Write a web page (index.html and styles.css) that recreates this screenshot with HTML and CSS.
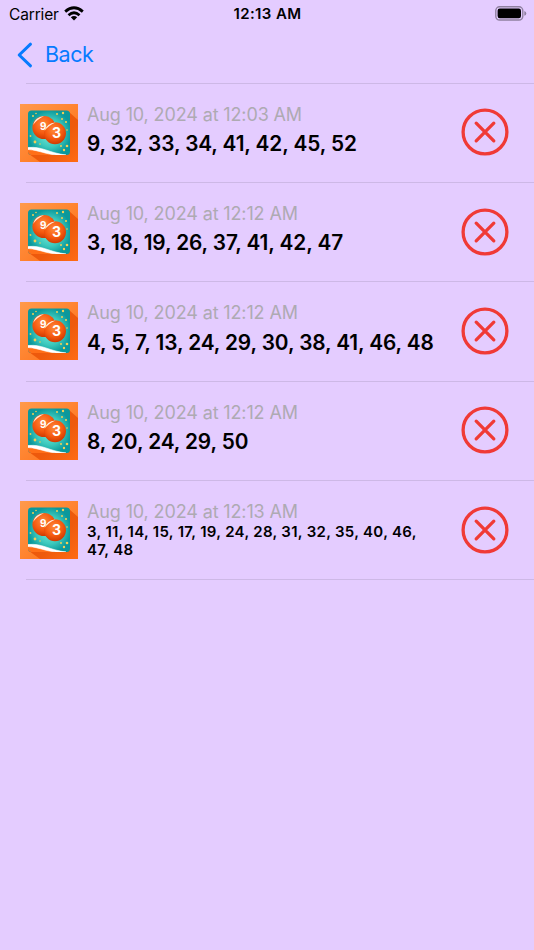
FILE: index.html
```html
<!DOCTYPE html>
<html lang="en">
<head>
    <meta charset="UTF-8">
    <meta name="viewport" content="width=device-width, initial-scale=1.0">
    <title>History</title>
    <link rel="stylesheet" href="styles.css">
</head>
<body>
    <!-- shared icons -->
    <svg class="defs" width="0" height="0">
        <defs>
            <linearGradient id="tile" x1="0" y1="0" x2="1" y2="1">
                <stop offset="0" stop-color="#ff9a4c"/>
                <stop offset="0.5" stop-color="#ff8430"/>
                <stop offset="1" stop-color="#ff6a10"/>
            </linearGradient>
            <linearGradient id="shadow" x1="0" y1="0" x2="1" y2="1">
                <stop offset="0" stop-color="#e9540c"/>
                <stop offset="0.6" stop-color="#ee5a0c"/>
                <stop offset="1" stop-color="#ff6c14"/>
            </linearGradient>
            <radialGradient id="teal">
                <stop offset="0" stop-color="#7deedd"/>
                <stop offset="0.6" stop-color="#3cc9bd"/>
                <stop offset="1" stop-color="#0b989b"/>
            </radialGradient>
            <radialGradient id="ball" cx="0.45" cy="0.35" r="0.65">
                <stop offset="0" stop-color="#ff8a3c"/>
                <stop offset="0.6" stop-color="#f65a10"/>
                <stop offset="1" stop-color="#cf3a02"/>
            </radialGradient>
            <clipPath id="card"><rect x="8" y="6.5" width="42" height="44.5" rx="3.5"/></clipPath>
        </defs>
        <symbol id="lotto" viewBox="0 0 58 58">
            <rect width="58" height="58" fill="url(#tile)"/>
            <path d="M49 8L58 16V58H20L9 50Z" fill="url(#shadow)"/>
            <g clip-path="url(#card)">
                <rect x="8" y="6" width="43" height="46" fill="url(#teal)"/>
                <g fill="#f5cf55">
                    <circle cx="13" cy="12" r="1"/>
                    <circle cx="16" cy="9.5" r="0.8"/>
                    <circle cx="37" cy="10" r="1"/>
                    <circle cx="43" cy="9" r="1.2"/>
                    <circle cx="42" cy="15" r="1"/>
                    <circle cx="46" cy="18" r="1.1"/>
                    <circle cx="47" cy="26" r="0.8"/>
                    <circle cx="10.5" cy="32" r="0.9"/>
                    <circle cx="15" cy="38" r="1.4"/>
                    <circle cx="20" cy="40" r="0.8"/>
                    <circle cx="41" cy="42" r="1"/>
                    <circle cx="47" cy="42" r="1.3"/>
                    <circle cx="44" cy="46" r="1.2"/>
                </g>
                <path d="M8 44.5C20 44 29 51 46 52H8Z" fill="#ff6f18"/>
                <path d="M8 43.5C22 42 29 49 46 51C29 52.5 20 46 8 45.5Z" fill="#fff" stroke="#fff" stroke-width="0.6"/>
            </g>
            <circle cx="24" cy="23.5" r="11.6" fill="url(#ball)"/>
            <path d="M13 21Q15.2 13 24 12.1Q16.5 16 13 21Z" fill="#ffeade"/>
            <circle cx="35" cy="29.3" r="11" fill="url(#ball)"/>
            <path d="M24.5 27Q26.5 19.3 35.5 18.4Q28 21.6 24.5 27Z" fill="#ffeade"/>
        </symbol>
        <symbol id="remove" viewBox="0 0 48 48">
            <g fill="none" stroke="#f03a36" stroke-linecap="round">
                <circle cx="24" cy="24" r="21.9" stroke-width="3.3"/>
                <path d="M15.2 15.2L32.8 32.8M32.8 15.2L15.2 32.8" stroke-width="3.3"/>
            </g>
        </symbol>
    </svg>

    <header class="status-bar">
        <div class="carrier">
            <span>Carrier</span>
            <svg width="20" height="15" viewBox="0 0 20 15">
                <g fill="none" stroke="#000" stroke-width="2.8">
                    <path d="M1.2 5.6Q10 -2 18.8 5.6"/>
                    <path d="M4.5 9.2Q10 4.4 15.5 9.2"/>
                </g>
                <path d="M6.8 11.3Q10 8.8 13.2 11.3L10 14.5Z"/>
            </svg>
        </div>
        <div class="time">12:13 AM</div>
        <div class="battery">
            <svg width="32" height="15" viewBox="0 0 32 15">
                <rect x="0.8" y="0.8" width="27" height="13.2" rx="3.8" fill="none" stroke="#8f80a0" stroke-width="1.4"/>
                <rect x="2.6" y="2.6" width="23.4" height="9.6" rx="2.2"/>
                <path d="M29.3 5Q31.3 5.8 31.3 7.4Q31.3 9 29.3 9.8Z" fill="#8f80a0"/>
            </svg>
        </div>
    </header>

    <nav class="nav-bar">
        <a class="back" href="#">
            <svg width="16" height="26" viewBox="0 0 16 26">
                <path d="M13.5 2.2L2.2 13L13.5 23.8" fill="none" stroke="#067bff" stroke-width="3" stroke-linecap="round" stroke-linejoin="round"/>
            </svg>
            <span>Back</span>
        </a>
    </nav>

    <ul class="history">
        <li class="entry">
            <svg class="thumb" viewBox="0 0 58 58">
                <use href="#lotto"/>
                <text class="ball-number" x="20" y="25.5" font-size="10">9</text>
                <text class="ball-number" x="32" y="34" font-size="14">3</text>
            </svg>
            <div class="info">
                <div class="date">Aug 10, 2024 at 12:03 AM</div>
                <div class="numbers">9, 32, 33, 34, 41, 42, 45, 52</div>
            </div>
            <svg class="remove"><use href="#remove"/></svg>
        </li>
        <li class="entry">
            <svg class="thumb" viewBox="0 0 58 58">
                <use href="#lotto"/>
                <text class="ball-number" x="20" y="25.5" font-size="10">9</text>
                <text class="ball-number" x="32" y="34" font-size="14">3</text>
            </svg>
            <div class="info">
                <div class="date">Aug 10, 2024 at 12:12 AM</div>
                <div class="numbers">3, 18, 19, 26, 37, 41, 42, 47</div>
            </div>
            <svg class="remove"><use href="#remove"/></svg>
        </li>
        <li class="entry">
            <svg class="thumb" viewBox="0 0 58 58">
                <use href="#lotto"/>
                <text class="ball-number" x="20" y="25.5" font-size="10">9</text>
                <text class="ball-number" x="32" y="34" font-size="14">3</text>
            </svg>
            <div class="info">
                <div class="date">Aug 10, 2024 at 12:12 AM</div>
                <div class="numbers">4, 5, 7, 13, 24, 29, 30, 38, 41, 46, 48</div>
            </div>
            <svg class="remove"><use href="#remove"/></svg>
        </li>
        <li class="entry">
            <svg class="thumb" viewBox="0 0 58 58">
                <use href="#lotto"/>
                <text class="ball-number" x="20" y="25.5" font-size="10">9</text>
                <text class="ball-number" x="32" y="34" font-size="14">3</text>
            </svg>
            <div class="info">
                <div class="date">Aug 10, 2024 at 12:12 AM</div>
                <div class="numbers">8, 20, 24, 29, 50</div>
            </div>
            <svg class="remove"><use href="#remove"/></svg>
        </li>
        <li class="entry">
            <svg class="thumb" viewBox="0 0 58 58">
                <use href="#lotto"/>
                <text class="ball-number" x="20" y="25.5" font-size="10">9</text>
                <text class="ball-number" x="32" y="34" font-size="14">3</text>
            </svg>
            <div class="info">
                <div class="date">Aug 10, 2024 at 12:13 AM</div>
                <div class="numbers small">3, 11, 14, 15, 17, 19, 24, 28, 31, 32, 35, 40, 46, 47, 48</div>
            </div>
            <svg class="remove"><use href="#remove"/></svg>
        </li>
    </ul>
</body>
</html>
```

FILE: styles.css
```css
* {
    box-sizing: border-box;
}
body {
    margin: 0;
    min-height: 100vh;
    background-color: #e4ccff;
    color: #000;
    font-family: Inter, "Liberation Sans", sans-serif;
}
svg {
    display: block;
    flex: none;
}
.defs {
    position: absolute;
}
.status-bar {
    display: grid;
    grid-template-columns: 1fr auto 1fr;
    align-items: center;
    height: 28px;
    padding: 0 7px 0 9px;
    font-size: 15.5px;
}
.carrier {
    display: flex;
    align-items: center;
    gap: 5px;
    letter-spacing: -0.15px;
}
.carrier svg {
    margin-top: -2px;
}
.time {
    font-weight: 600;
    font-size: 15px;
    letter-spacing: 0.4px;
    margin: -1px 0 0 -1px;
}
.battery {
    display: flex;
    justify-content: flex-end;
    margin-top: -1px;
}
.nav-bar {
    height: 55px;
    padding: 13px 17px 0;
}
.back {
    display: inline-flex;
    align-items: center;
    gap: 12px;
    color: #067bff;
    font-size: 21.5px;
    letter-spacing: -0.5px;
    line-height: 27px;
    text-decoration: none;
}
.history {
    margin: 0;
    padding: 0.7px 0 0;
    list-style: none;
    background: linear-gradient(#cdb8e6, #cdb8e6) 26px 0 / 100% 1px no-repeat;
}
.entry {
    display: flex;
    height: 99.3px;
    padding: 20.1px 25px 0 19.5px;
    background: linear-gradient(#cdb8e6, #cdb8e6) 26px 100% / 100% 1px no-repeat;
}
.thumb {
    width: 58px;
    height: 58px;
}
.ball-number {
    fill: #fff;
    font-weight: 700;
}
.info {
    flex: 1;
    padding-left: 9.5px;
}
.date {
    color: #aeaab2;
    font-size: 18px;
    letter-spacing: -0.13px;
    line-height: 22px;
}
.numbers {
    margin-top: 4.4px;
    font-size: 20.8px;
    font-weight: 600;
    letter-spacing: -0.1px;
    line-height: 28px;
    white-space: nowrap;
}
.numbers.small {
    width: 340px;
    margin-top: 0;
    font-size: 15px;
    letter-spacing: 0.3px;
    line-height: 18px;
    white-space: normal;
}
.remove {
    width: 48px;
    height: 48px;
    margin-top: 4.6px;
}
```
